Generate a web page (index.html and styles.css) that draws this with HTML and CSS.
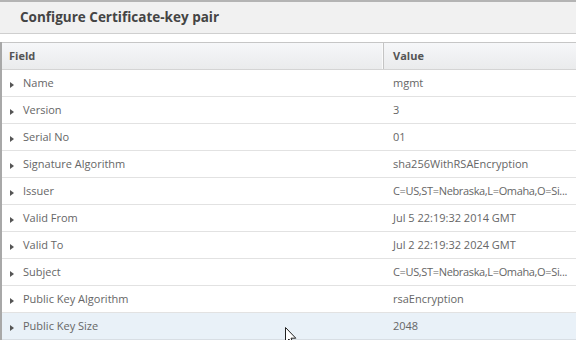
FILE: index.html
```html
<!DOCTYPE html>
<html lang="en">
<head>
    <meta charset="UTF-8">
    <title>Configure Certificate-key pair</title>
    <link rel="stylesheet" href="styles.css">
</head>
<body>
    <div class="dialog">
        <div class="dialog-title">Configure Certificate-key pair</div>
        <div class="grid">
            <div class="grid-head">
                <div class="col-field">Field</div>
                <div class="col-value">Value</div>
            </div>
            <div class="row"><div class="col-field"><span class="arrow"></span>Name</div><div class="col-value">mgmt</div></div>
            <div class="row"><div class="col-field"><span class="arrow"></span>Version</div><div class="col-value">3</div></div>
            <div class="row"><div class="col-field"><span class="arrow"></span>Serial No</div><div class="col-value">01</div></div>
            <div class="row"><div class="col-field"><span class="arrow"></span>Signature Algorithm</div><div class="col-value">sha256WithRSAEncryption</div></div>
            <div class="row"><div class="col-field"><span class="arrow"></span>Issuer</div><div class="col-value dn">C=US,ST=Nebraska,L=Omaha,O=Si...</div></div>
            <div class="row"><div class="col-field"><span class="arrow"></span>Valid From</div><div class="col-value">Jul 5 22:19:32 2014 GMT</div></div>
            <div class="row"><div class="col-field"><span class="arrow"></span>Valid To</div><div class="col-value">Jul 2 22:19:32 2024 GMT</div></div>
            <div class="row"><div class="col-field"><span class="arrow"></span>Subject</div><div class="col-value dn">C=US,ST=Nebraska,L=Omaha,O=Si...</div></div>
            <div class="row"><div class="col-field"><span class="arrow"></span>Public Key Algorithm</div><div class="col-value">rsaEncryption</div></div>
            <div class="row row-hover"><div class="col-field"><span class="arrow"></span>Public Key Size</div><div class="col-value">2048</div></div>
        </div>
        <svg class="cursor" width="12" height="19" viewBox="0 0 12 19">
            <path d="M0.5 0.5 L0.5 15.5 L4 12 L6.5 18 L8.5 17 L6 11.2 L10.8 11.2 Z" fill="#fff" stroke="#222" stroke-width="1"/>
        </svg>
    </div>
</body>
</html>
```

FILE: styles.css
```css
body { margin: 0; background: #fff; font-family: "Open Sans", "Noto Sans", sans-serif; color: #666; overflow: hidden; }
.dialog { position: relative; width: 576px; height: 338px; border-top: 2px solid #b4b4b4; overflow: hidden; }
.dialog-title {
    height: 31px;
    line-height: 31px;
    padding-left: 20px;
    background-color: #f1f1f1;
    border-bottom: 1px solid #cfcfcf;
    font-size: 13.5px;
    font-weight: 700;
    color: #444;
}
.grid { margin-top: 8px; border-left: 2px solid #a8a8a8; }
.grid-head {
    display: flex;
    height: 26px;
    line-height: 26px;
    border-top: 1px solid #c6c6c6;
    border-bottom: 1px solid #d4d4d4;
    background: linear-gradient(#f6f7f9, #eaebec);
    font-size: 11px;
    font-weight: 700;
    color: #555;
}
.grid-head .col-field { padding-left: 7px; border-right: 1px solid #c4c4c4; box-shadow: inset -1px 0 0 #fafafa; }
.grid-head .col-value { padding-left: 9px; }
.col-field { width: 374px; flex-shrink: 0; }
.col-value { flex: 1; padding-left: 8px; white-space: nowrap; }
.row {
    display: flex;
    height: 26px;
    line-height: 26px;
    border-bottom: 1px solid #e2e2e2;
    font-size: 11px;
    color: #666;
}
.row .col-field { padding-left: 8px; }
.row .col-value { padding-left: 9px; }
.row .dn { letter-spacing: -0.35px; }
.row-hover { background-color: #e9f1f8; border-bottom-color: #d8dee4; }
.arrow {
    display: inline-block;
    width: 0;
    height: 0;
    margin-right: 9px;
    border-top: 3.5px solid transparent;
    border-bottom: 3.5px solid transparent;
    border-left: 4px solid #555;
    vertical-align: -1px;
}
.cursor { position: absolute; left: 285px; top: 325px; }
```
